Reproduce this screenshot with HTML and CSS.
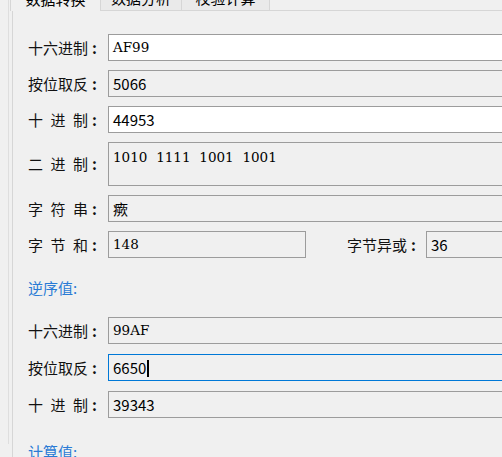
FILE: index.html
```html
<!DOCTYPE html>
<html lang="zh-CN">
<head>
<meta charset="utf-8">
<title>数据转换</title>
<link rel="stylesheet" href="styles.css">
</head>
<body>
<div class="window">
  <div class="tabs">
    <div class="tab tab-active">数据转换</div>
    <div class="tab tab-2">数据分析</div>
    <div class="tab tab-3">校验计算</div>
    <div class="tab-rest"></div>
  </div>
  <div class="page">
    <div class="group">
      <div class="row">
        <span class="label"><span class="label-text">十六进制</span><span class="colon">:</span></span>
        <div class="box box-edit mono">AF99</div>
      </div>
      <div class="row">
        <span class="label"><span class="label-text">按位取反</span><span class="colon">:</span></span>
        <div class="box sans">5066</div>
      </div>
      <div class="row">
        <span class="label"><span class="label-text">十 进 制</span><span class="colon">:</span></span>
        <div class="box box-edit sans">44953</div>
      </div>
      <div class="row row-top">
        <span class="label"><span class="label-text">二 进 制</span><span class="colon">:</span></span>
        <div class="box box-multi mono">1010 1111 1001 1001</div>
      </div>
      <div class="row">
        <span class="label"><span class="label-text">字 符 串</span><span class="colon">:</span></span>
        <div class="box cjk">瘚</div>
      </div>
      <div class="row">
        <span class="label"><span class="label-text">字 节 和</span><span class="colon">:</span></span>
        <div class="box box-short mono">148</div>
        <span class="label label-inline"><span class="label-text">字节异或</span><span class="colon">:</span></span>
        <div class="box sans">36</div>
      </div>
    </div>

    <div class="section-title">逆序值:</div>

    <div class="group group-wide">
      <div class="row">
        <span class="label"><span class="label-text">十六进制</span><span class="colon">:</span></span>
        <div class="box mono">99AF</div>
      </div>
      <div class="row">
        <span class="label"><span class="label-text">按位取反</span><span class="colon">:</span></span>
        <div class="box box-focus sans">6650<span class="caret"></span></div>
      </div>
      <div class="row">
        <span class="label"><span class="label-text">十 进 制</span><span class="colon">:</span></span>
        <div class="box sans">39343</div>
      </div>
    </div>

    <div class="section-title section-title-2">计算值:</div>
  </div>
</div>
</body>
</html>
```

FILE: styles.css
```css
* { box-sizing: border-box; }
html, body { margin: 0; padding: 0; }
body {
  width: 502px;
  height: 457px;
  overflow: hidden;
  background: #f0f0f0;
  font-family: "Noto Sans CJK SC", "Microsoft YaHei", sans-serif;
  font-size: 15px;
  color: #000;
}
.window {
  margin-left: 8px;
  border-left: 1px solid #dedede;
  padding-left: 1px;
  height: 457px;
}
.tabs {
  display: flex;
  margin-top: -13px;
  height: 24px;
}
.tab {
  height: 24px;
  line-height: 22px;
  text-align: center;
  border: 1px solid #d6d6d6;
  border-top: none;
  background: #eaeaea;
  white-space: nowrap;
  color: #000;
}
.tab-active {
  width: 91px;
  background: #f0f0f0;
  border-bottom: none;
  line-height: 24px;
}
.tab-2 { width: 82px; margin-left: -1px; }
.tab-3 { width: 89px; margin-left: -1px; }
.tab-rest {
  flex: 1;
  border-bottom: 1px solid #d6d6d6;
}
.page {
  margin-left: 2px;
  border-left: 1px solid #d6d6d6;
  padding: 23px 0 0 15px;
}
.group {
  display: flex;
  flex-direction: column;
  gap: 9px;
}
.group-wide { gap: 10px; }
.row {
  display: flex;
  align-items: center;
  height: 27px;
}
.row-top { height: 44px; }
.label {
  display: flex;
  align-items: center;
  width: 80px;
  flex: none;
  line-height: 20px;
  white-space: nowrap;
  color: #111;
}
.label-text {
  display: inline-block;
  width: 60px;
  text-align: justify;
  text-align-last: justify;
}
.colon {
  margin-left: 4px;
  font-weight: 700;
}
.label-inline {
  margin-left: 41px;
  width: 79px;
}
.box {
  flex: none;
  width: 410px;
  height: 27px;
  border: 1px solid #9c9c9c;
  background: #f0f0f0;
  padding: 3px 0 0 4px;
  line-height: 19px;
  white-space: nowrap;
  overflow: hidden;
}
.box-edit { background: #fff; }
.box-multi { height: 44px; padding-top: 5px; }
.box-short { width: 198px; }
.box-focus { border-color: #0078d7; }
.mono {
  font-family: "DejaVu Serif", "Liberation Serif", serif;
  font-size: 13.5px;
  word-spacing: 4.5px;
  padding-left: 4px;
}
.sans {
  font-family: "Noto Sans CJK SC", sans-serif;
  font-size: 15px;
}
.cjk {
  font-family: "Noto Sans CJK SC", sans-serif;
  font-size: 15px;
}
.caret {
  display: inline-block;
  width: 2px;
  height: 17px;
  background: #000;
  vertical-align: -3px;
  margin-left: 1px;
}
.section-title {
  color: #2a7bd5;
  height: 20px;
  line-height: 20px;
  margin: 20px 0 19px;
}
.section-title-2 { margin-top: 24px; }
```
